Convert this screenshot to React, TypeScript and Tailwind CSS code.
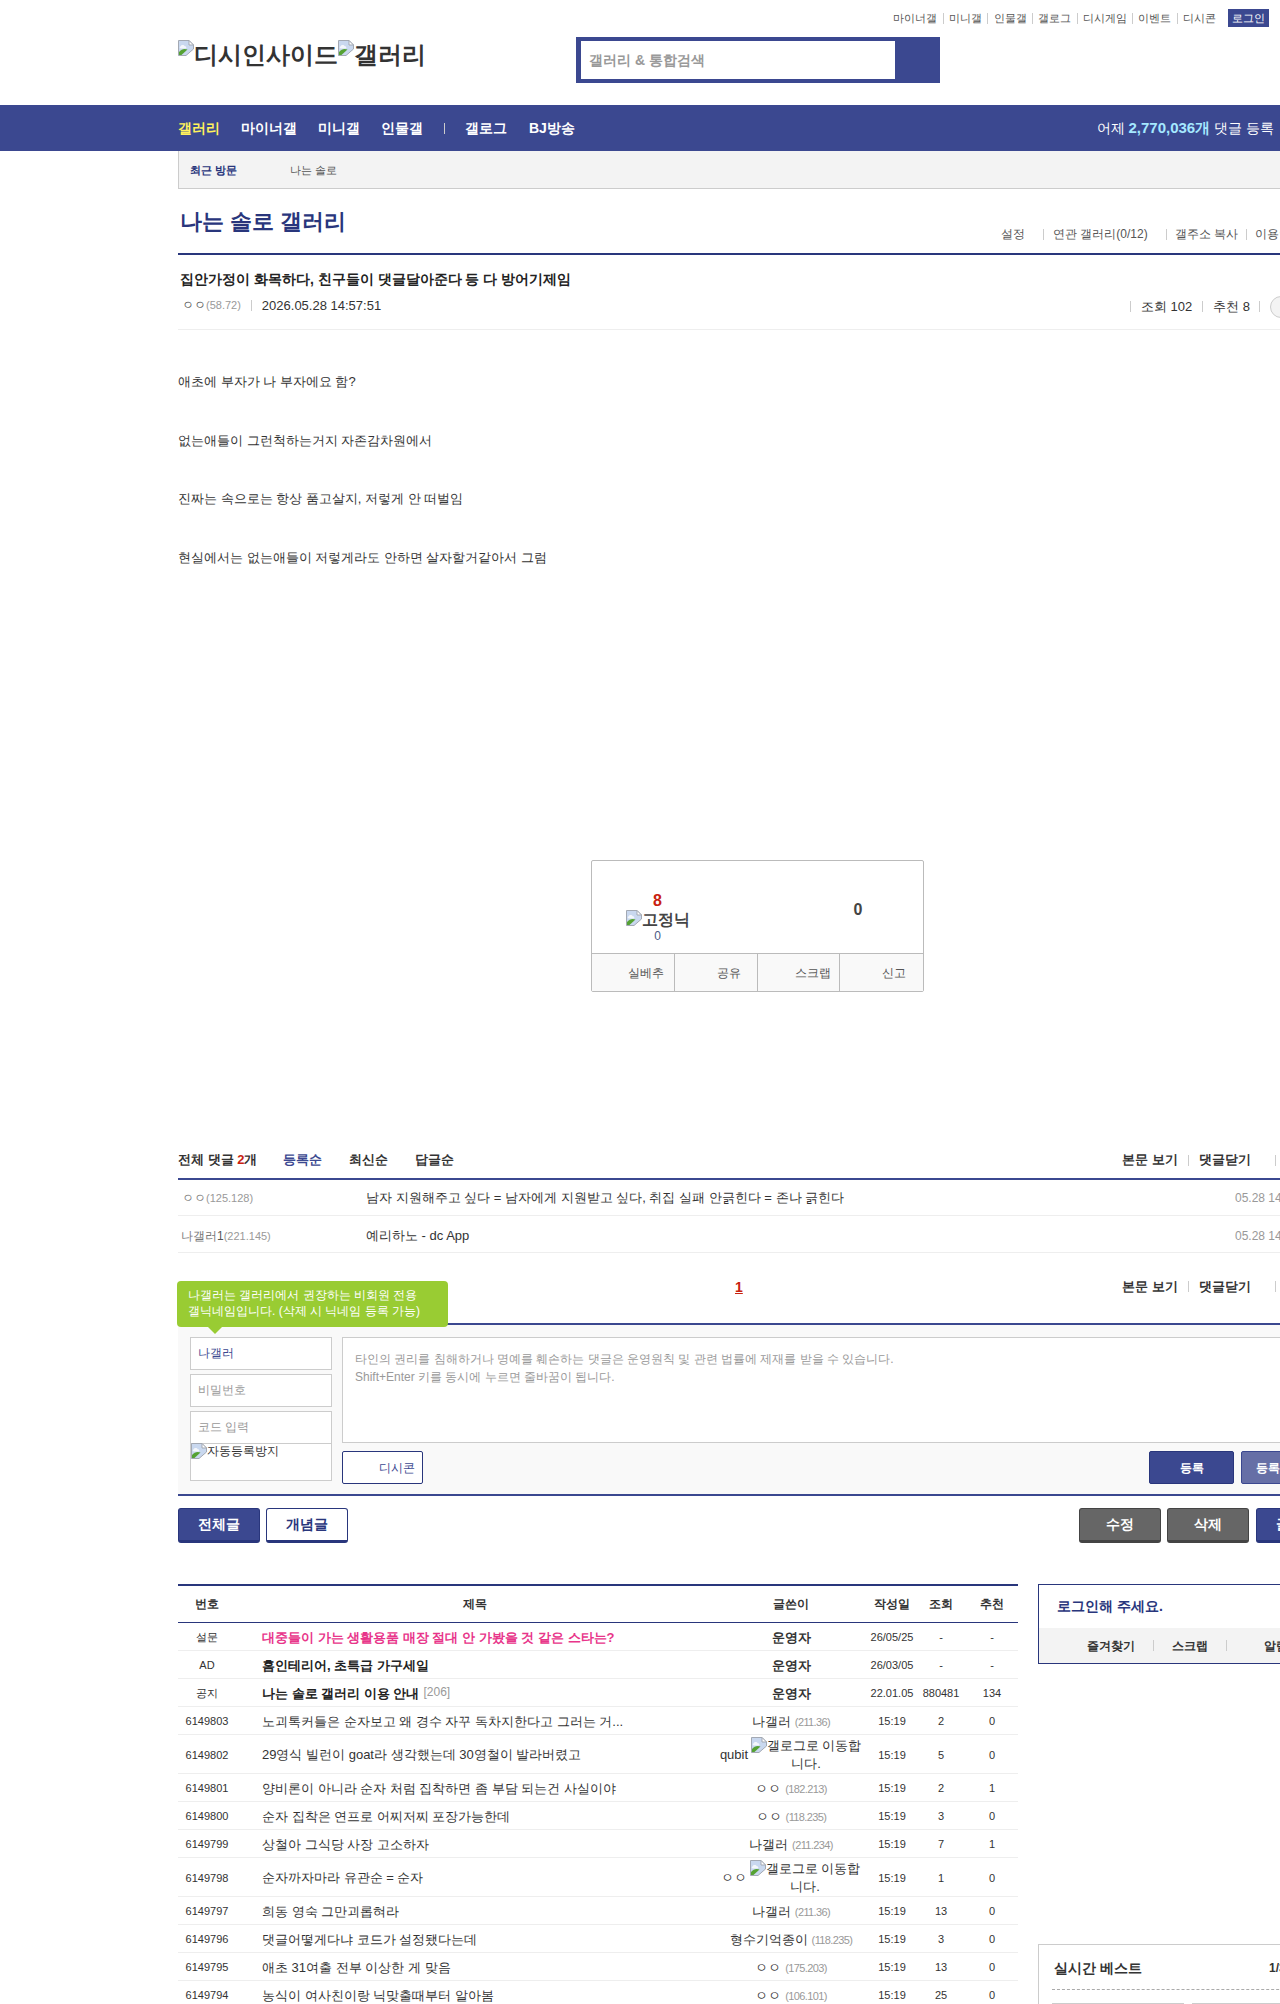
// Hangul is left to the system fallback on purpose: naming a Noto CJK family
// narrows the glyphs (0.92em) and the reference's text widths no longer match.
const FONT = "font-['Liberation_Sans',sans-serif]";

function BrokenImg({ className = '' }: { className?: string }) {
  return (
    <svg viewBox="0 0 16 16" className={`inline-block w-4 h-4 shrink-0 align-top ${className}`}>
      <path d="M.5.5h10.500l4.500 4.500v4L8 15.500H.5z" fill="#c9d8ef" stroke="#a3a9b3" />
      <path d="M2.500 6.500c.8-1.800 3.400-2 4.300-.3 1.600-.2 2.200 1.800.7 2.300H2.800c-1.500-.3-1.300-2 -.3-2z" fill="#f4f7fb" />
      <path d="M1 15v-3c2.500-3 5.500-3.800 8.500-2.500L3.500 15z" fill="#55a233" />
      <path d="M11 .5V5h4.500z" fill="#fff" stroke="#a3a9b3" />
      <path d="M9 16l7-6v6z" fill="#fff" />
    </svg>
  );
}

function Sep({ className = '' }: { className?: string }) {
  return <span className={`inline-block w-px h-[11px] bg-[#ccc] ${className}`} />;
}

const topLinks = ['마이너갤', '미니갤', '인물갤', '갤로그', '디시게임', '이벤트', '디시콘'];

type Row = {
  num: string;
  title: string;
  writer: string;
  ip?: string;
  date: string;
  views: string;
  rec: string;
  kind?: 'poll' | 'notice';
  reply?: string;
  badge?: boolean;
};

const rows: Row[] = [
  { num: '설문', title: '대중들이 가는 생활용품 매장 절대 안 가봤을 것 같은 스타는?', writer: '운영자', date: '26/05/25', views: '-', rec: '-', kind: 'poll' },
  { num: 'AD', title: '홈인테리어, 초특급 가구세일', writer: '운영자', date: '26/03/05', views: '-', rec: '-', kind: 'notice' },
  { num: '공지', title: '나는 솔로 갤러리 이용 안내', reply: '[206]', writer: '운영자', date: '22.01.05', views: '880481', rec: '134', kind: 'notice' },
  { num: '6149803', title: '노괴톡커들은 순자보고 왜 경수 자꾸 독차지한다고 그러는 거...', writer: '나갤러', ip: '(211.36)', date: '15:19', views: '2', rec: '0' },
  { num: '6149802', title: '29영식 빌런이 goat라 생각했는데 30영철이 발라버렸고', writer: 'qubit', badge: true, date: '15:19', views: '5', rec: '0' },
  { num: '6149801', title: '양비론이 아니라 순자 처럼 집착하면 좀 부담 되는건 사실이야', writer: 'ㅇㅇ', ip: '(182.213)', date: '15:19', views: '2', rec: '1' },
  { num: '6149800', title: '순자 집착은 연프로 어찌저찌 포장가능한데', writer: 'ㅇㅇ', ip: '(118.235)', date: '15:19', views: '3', rec: '0' },
  { num: '6149799', title: '상철아 그식당 사장 고소하자', writer: '나갤러', ip: '(211.234)', date: '15:19', views: '7', rec: '1' },
  { num: '6149798', title: '순자까자마라 유관순 = 순자', writer: 'ㅇㅇ', badge: true, date: '15:19', views: '1', rec: '0' },
  { num: '6149797', title: '희동 영숙 그만괴롭혀라', writer: '나갤러', ip: '(211.36)', date: '15:19', views: '13', rec: '0' },
  { num: '6149796', title: '댓글어떻게다냐 코드가 설정됐다는데', writer: '형수기억종이', ip: '(118.235)', date: '15:19', views: '3', rec: '0' },
  { num: '6149795', title: '애초 31여출 전부 이상한 게 맞음', writer: 'ㅇㅇ', ip: '(175.203)', date: '15:19', views: '13', rec: '0' },
  { num: '6149794', title: '농식이 여사친이랑 닉맞출때부터 알아봄', writer: 'ㅇㅇ', ip: '(106.101)', date: '15:19', views: '25', rec: '0' },
];

function Writer({ row }: { row: Row }) {
  if (row.badge) {
    return (
      <div className="flex items-center justify-center">
        <span className="mr-[2px] text-[13px]">{row.writer}</span>
        <span className="w-[112px] text-center text-[13px] leading-[18px]">
          <BrokenImg />갤로그로 이동합니다.
        </span>
      </div>
    );
  }
  return (
    <>
      <span className={row.kind ? 'font-bold' : ''}>{row.writer}</span>
      {row.ip && <span className="ml-1 text-[11px] tracking-[-0.6px] text-[#999]">{row.ip}</span>}
    </>
  );
}

function ListRow({ row }: { row: Row }) {
  const h = row.badge ? 'h-[39px] pt-[2px]' : 'h-[28px] pt-[2px]';
  return (
    <tr className="text-center text-[11px] text-[#333]">
      <td className={`${h} border-b border-[#eee]`}>{row.num}</td>
      <td className={`${h} text-left pl-[26px] text-[13px] border-b border-[#eee] ${row.kind === 'poll' ? 'font-bold text-[#e8358a]' : row.kind === 'notice' ? 'font-bold text-[#222]' : ''}`}>
        {row.title}
        {row.reply && <span className="ml-1 align-[2px] text-[12px] font-normal text-[#999]">{row.reply}</span>}
      </td>
      <td className={`${h} text-[13px] border-b border-[#eee]`}>
        <Writer row={row} />
      </td>
      <td className={`${h} border-b border-[#eee]`}>{row.date}</td>
      <td className={`${h} border-b border-[#eee]`}>{row.views}</td>
      <td className={`${h} border-b border-[#eee]`}>{row.rec}</td>
    </tr>
  );
}

function CommentTools() {
  return (
    <div className="flex items-center text-[13px] font-bold text-[#333]">
      <span>본문 보기</span>
      <Sep className="mx-[10px]" />
      <span>댓글닫기</span>
      <Sep className="ml-[24px] mr-[10px]" />
      <span>새로고침</span>
    </div>
  );
}

function BlueBtn({ children, className = '' }: { children: React.ReactNode; className?: string }) {
  return (
    <button className={`w-[82px] h-[35px] rounded-[3px] bg-[#3b4890] border border-[#29367c] border-b-[3px] text-[14px] font-bold text-white ${className}`}>
      {children}
    </button>
  );
}

function GrayBtn({ children }: { children: React.ReactNode }) {
  return (
    <button className="w-[82px] h-[35px] rounded-[3px] bg-[#666] border border-[#444] border-b-[3px] text-[14px] font-bold text-white">
      {children}
    </button>
  );
}

export default function App() {
  return (
    <div className={`relative w-[1280px] h-[2004px] overflow-hidden bg-white text-[#333] ${FONT}`}>
      <header className="h-[105px] pl-[178px]">
        <div className="w-[1091px] h-[37px] pt-[9px] flex justify-end items-start">
          <div className="flex items-center h-[18px] text-[11px] text-[#555]">
            {topLinks.map((t, i) => (
              <span key={t} className="flex items-center">
                {i > 0 && <Sep className="mx-[5.300px]" />}
                {t}
              </span>
            ))}
          </div>
          <span className="ml-[12px] w-[41px] h-[18px] flex items-center justify-center bg-[#3b4890] text-[11px] text-white">로그인</span>
        </div>
        <div className="flex items-start">
          <div className="w-[398px] pt-[3px] text-[24px] leading-[30px] font-bold text-[#333] whitespace-nowrap">
            <BrokenImg />디시인사이드<BrokenImg />갤러리
          </div>
          <div className="w-[364px] h-[46px] bg-[#3b4890] pl-[4px] py-[4px] pr-[45px]">
            <div className="h-full bg-white flex items-center pl-[8px] border-l border-[#3b4890] text-[14px] font-bold text-[#999]">갤러리 &amp; 통합검색</div>
          </div>
        </div>
      </header>

      <nav className="h-[46px] bg-[#3b4890] pl-[178px] pr-[6px] pt-[1px] flex items-center text-[14px] font-bold text-white">
        <span className="text-[#fff25c]">갤러리</span>
        <span className="ml-[21px]">마이너갤</span>
        <span className="ml-[21px]">미니갤</span>
        <span className="ml-[21px]">인물갤</span>
        <Sep className="ml-[21px] bg-[#6771a9]" />
        <span className="ml-[20px]">갤로그</span>
        <span className="ml-[22px]">BJ방송</span>
        <span className="ml-auto text-[14px] font-normal">
          어제 <b className="text-[15px] text-[#a5e8ff]">2,770,036개</b> 댓글 등록
        </span>
      </nav>

      <main className="ml-[178px] w-[1160px]">
        <div className="h-[38px] pt-[1px] flex items-center bg-[#f3f3f3] border-l border-b border-[#ccc] pl-[11px] text-[11px]">
          <b className="w-[100px] text-[#29367c]">최근 방문</b>
          <span className="text-[#555]">나는 솔로</span>
        </div>

        <div className="h-[66px] border-b-2 border-[#29367c] flex items-start relative">
          <h2 className="ml-[2px] mt-[16px] text-[22px] leading-[34px] font-bold text-[#29367c]">나는 솔로 갤러리</h2>
          <div className="ml-auto mt-[36px] flex items-center text-[12px] text-[#555]">
            <span>설정</span>
            <Sep className="ml-[18px] mr-[9px]" />
            <span>연관 갤러리(0/12)</span>
            <Sep className="ml-[18px] mr-[8px]" />
            <span>갤주소 복사</span>
            <Sep className="mx-[8px]" />
            <span className="mr-[35px]">이용안내</span>
          </div>
        </div>

        <div className="h-[75px] border-b border-[#eee]">
          <h3 className="ml-[2px] pt-[14px] text-[14px] leading-[20px] font-bold text-[#222]">집안가정이 화목하다, 친구들이 댓글달아준다 등 다 방어기제임</h3>
          <div className="mt-[5px] flex items-center text-[13px] text-[#333]">
            <span className="ml-[4px] text-[12px] text-[#555]">ㅇㅇ</span>
            <span className="text-[11px] text-[#999]">(58.72)</span>
            <Sep className="mx-[10px]" />
            <span>2026.05.28 14:57:51</span>
            <div className="ml-auto flex items-center mt-[3px]">
              <Sep className="mr-[10px]" />
              <span>조회 102</span>
              <Sep className="mx-[10px]" />
              <span>추천 8</span>
              <Sep className="ml-[9px] mr-[10px]" />
              <span className="-my-[8px] w-[30px] h-[22px] rounded-full border border-[#ccc] bg-[#f3f3f3] mr-[38px]" />
            </div>
          </div>
        </div>

        <div className="h-[530px] pt-[42px] text-[13px] leading-[20px] text-[#333] space-y-[38.600px]">
          <p>애초에 부자가 나 부자에요 함?</p>
          <p>없는애들이 그런척하는거지 자존감차원에서</p>
          <p>진짜는 속으로는 항상 품고살지, 저렇게 안 떠벌임</p>
          <p>현실에서는 없는애들이 저렇게라도 안하면 살자할거같아서 그럼</p>
        </div>

        <div className="w-[333px] h-[132px] border border-[#bbb] rounded-[2px] ml-[413px]">
          <div className="h-[93px] flex border-b border-[#bbb]">
            <div className="w-[131px] flex flex-col items-center pt-[31px] text-center">
              <b className="text-[16px] leading-[18px] text-[#c8210f]">8</b>
              <span className="text-[16px] leading-[20px] font-bold text-[#444] whitespace-nowrap"><BrokenImg />고정닉</span>
              <span className="text-[12px] leading-[12px] text-[#4b5a85]">0</span>
            </div>
            <div className="flex-1 pl-[70px] pt-[40px]">
              <b className="block w-[130px] text-center text-[16px] leading-[18px] text-[#444]">0</b>
            </div>
          </div>
          <div className="h-[37px] grid grid-cols-4 bg-[#f9f9f9] text-[12px] text-[#555]">
            <span className="flex items-center justify-end pr-[10px] border-r border-[#bbb]">실베추</span>
            <span className="flex items-center justify-end pr-[16px] border-r border-[#bbb]">공유</span>
            <span className="flex items-center justify-end pr-[8px] border-r border-[#bbb]">스크랩</span>
            <span className="flex items-center justify-end pr-[17px]">신고</span>
          </div>
        </div>

        <div className="mt-[152px] h-[34px] pb-[2px] flex items-center justify-between text-[13px] font-bold text-[#333]">
          <div className="flex items-center">
            <span>전체 댓글 <span className="text-[#c8210f]">2</span>개</span>
            <span className="ml-[26px] text-[#3b4890]">등록순</span>
            <span className="ml-[27px]">최신순</span>
            <span className="ml-[27px]">답글순</span>
          </div>
          <CommentTools />
        </div>

        <div className="border-t-2 border-[#3b4890] text-[12px]">
          <div className="h-[36px] pt-[1px] flex items-center border-b border-[#eee]">
            <span className="ml-[4px] w-[184px] text-[12px] text-[#777]">ㅇㅇ<span className="text-[11px] text-[#999]">(125.128)</span></span>
            <span className="text-[13px] text-[#333]">남자 지원해주고 싶다 = 남자에게 지원받고 싶다, 취집 실패 안긁힌다 = 존나 긁힌다</span>
            <span className="ml-auto w-[103px] text-[#999]">05.28 14:58:11</span>
          </div>
          <div className="h-[37px] pt-[3px] flex items-center border-b border-[#eee]">
            <span className="ml-[3px] w-[185px] text-[12px] text-[#777]">나갤러<span className="text-[#555]">1</span><span className="text-[11px] text-[#999]">(221.145)</span></span>
            <span className="text-[13px] text-[#333]">예리하노 - dc App</span>
            <span className="ml-auto w-[103px] text-[#999]">05.28 14:58:30</span>
          </div>
        </div>

        <div className="relative h-[70px]">
          <b className="absolute left-[557px] top-[24px] text-[14px] leading-[20px] text-[#c8210f] underline">1</b>
          <div className="flex justify-end pt-[24px]">
            <CommentTools />
          </div>
        </div>

        <div className="relative h-[173px] border-y-2 border-[#3b4890] bg-[#f9f9f9] pt-[12px] pl-[12px] flex">
          <div className="absolute -left-px -top-[44px] w-[271px] h-[46px] rounded-[4px] bg-[#9c3] px-[11px] py-[6px] text-[12px] leading-[16px] text-white whitespace-nowrap">
            나갤러는 갤러리에서 권장하는 비회원 전용<br />갤닉네임입니다. (삭제 시 닉네임 등록 가능)
            <span className="absolute left-[31px] -bottom-[7px] border-x-[7px] border-t-[7px] border-x-transparent border-t-[#9c3]" />
          </div>
          <div className="w-[142px] text-[12px]">
            <div className="h-[33px] pb-[1px] border border-[#ccc] bg-white flex items-center pl-[7px] text-[#3b4890]">나갤러</div>
            <div className="mt-[4px] h-[33px] pb-[1px] border border-[#ccc] bg-white flex items-center pl-[7px] text-[#999]">비밀번호</div>
            <div className="mt-[4px] h-[70px] border border-[#ccc] bg-white">
              <div className="h-[32px] pb-[1px] border-b border-[#ccc] flex items-center pl-[7px] text-[#999]">코드 입력</div>
              <div className="-mt-px text-[12px] leading-[16px] whitespace-nowrap text-[#333]"><BrokenImg />자동등록방지</div>
            </div>
          </div>
          <div className="ml-[10px] flex-1">
            <div className="h-[106px] border border-[#ccc] bg-white px-[12px] pt-[12px] text-[12px] leading-[18px] text-[#999]">
              타인의 권리를 침해하거나 명예를 훼손하는 댓글은 운영원칙 및 관련 법률에 제재를 받을 수 있습니다.<br />
              Shift+Enter 키를 동시에 누르면 줄바꿈이 됩니다.
            </div>
            <div className="mt-[8px] flex">
              <button className="w-[81px] h-[33px] rounded-[2px] border border-[#29367c] bg-white pl-[36px] text-left text-[12px] text-[#3b4890]">디시콘</button>
              <button className="ml-[726px] w-[85px] h-[33px] rounded-[2px] border border-[#29367c] bg-[#3b4890] text-[12px] font-bold text-white">등록</button>
              <button className="ml-[7px] w-[85px] h-[33px] rounded-[2px] border border-[#3b4890] bg-[#666fa6] pl-[14px] text-left text-[12px] font-bold text-white whitespace-nowrap">등록+추천</button>
            </div>
          </div>
        </div>

        <div className="mt-[12px] flex">
          <BlueBtn>전체글</BlueBtn>
          <button className="ml-[6px] w-[82px] h-[35px] rounded-[3px] bg-white border border-[#29367c] border-b-[3px] text-[14px] font-bold text-[#29367c]">개념글</button>
          <div className="ml-auto flex gap-[6px]">
            <GrayBtn>수정</GrayBtn>
            <GrayBtn>삭제</GrayBtn>
            <BlueBtn className="ml-px">글쓰기</BlueBtn>
          </div>
        </div>

        <div className="mt-[41px] flex items-start gap-[20px]">
          <table className="w-[840px] table-fixed border-separate border-spacing-0 border-t-2 border-[#29367c]">
            <colgroup>
              <col className="w-[58px]" />
              <col className="w-[478px]" />
              <col className="w-[154px]" />
              <col className="w-[48px]" />
              <col className="w-[50px]" />
              <col className="w-[52px]" />
            </colgroup>
            <thead>
              <tr className="text-[12px] font-bold text-[#333]">
                <th className="h-[37px] border-b border-[#29367c]">번호</th>
                <th className="h-[37px] border-b border-[#29367c]">제목</th>
                <th className="h-[37px] border-b border-[#29367c]">글쓴이</th>
                <th className="h-[37px] border-b border-[#29367c]">작성일</th>
                <th className="h-[37px] border-b border-[#29367c]">조회</th>
                <th className="h-[37px] border-b border-[#29367c]">추천</th>
              </tr>
            </thead>
            <tbody>
              {rows.map((r) => (
                <ListRow key={r.num} row={r} />
              ))}
            </tbody>
          </table>

          <aside className="w-[300px]">
            <div className="h-[80px] border border-[#29367c]">
              <div className="h-[43px] flex items-center pl-[18px] text-[14px] font-bold text-[#29367c]">로그인해 주세요.</div>
              <div className="h-[35px] flex items-center bg-[#f3f3f3] pl-[48px] text-[12px] font-bold text-[#333]">
                <span>즐겨찾기</span>
                <Sep className="mx-[18px]" />
                <span>스크랩</span>
                <Sep className="mx-[18px]" />
                <span className="ml-[19px]">알림</span>
              </div>
            </div>
            <div className="mt-[280px] h-[200px] border border-[#ccc] px-[13px]">
              <div className="h-[45px] pt-[2px] flex items-center border-b border-dashed border-[#aaa]">
                <b className="ml-[2px] text-[14px] text-[#333]">실시간 베스트</b>
                <b className="ml-auto w-[55px] text-[12px] text-[#333]">1/3</b>
              </div>
              <div className="mt-[13px] flex gap-[8px]">
                <div className="w-[132px] h-[100px] border border-[#ccc]" />
                <div className="w-[132px] h-[100px] border border-[#ccc]" />
              </div>
            </div>
          </aside>
        </div>
      </main>
    </div>
  );
}
